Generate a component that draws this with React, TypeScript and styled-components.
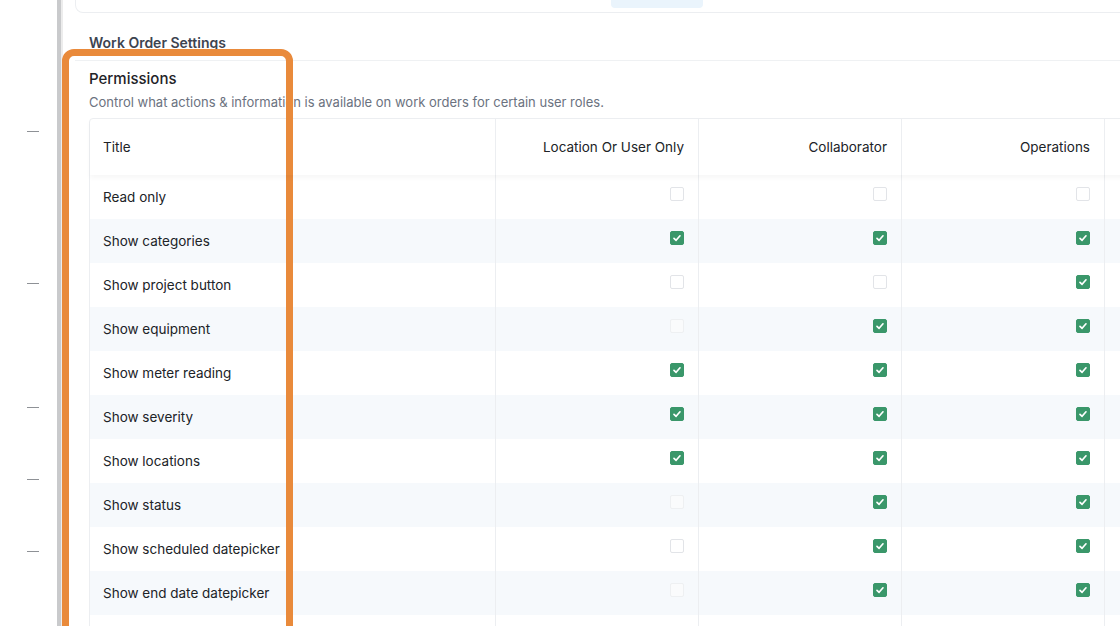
import React from 'react';
import styled, { createGlobalStyle } from 'styled-components';

const GlobalStyle = createGlobalStyle`
  html, body {
    margin: 0;
    padding: 0;
    background: #fff;
    overflow: hidden;
  }
  body {
    font-family: Inter, "Noto Sans", "Liberation Sans", sans-serif;
    color: #1f2328;
    -webkit-font-smoothing: antialiased;
  }
`;

type Perm = {
  title: string;
  values: Array<'on' | 'off' | 'disabled'>;
};

const permissions: Perm[] = [
  { title: 'Read only', values: ['off', 'off', 'off', 'off'] },
  { title: 'Show categories', values: ['on', 'on', 'on', 'on'] },
  { title: 'Show project button', values: ['off', 'off', 'on', 'on'] },
  { title: 'Show equipment', values: ['disabled', 'on', 'on', 'on'] },
  { title: 'Show meter reading', values: ['on', 'on', 'on', 'on'] },
  { title: 'Show severity', values: ['on', 'on', 'on', 'on'] },
  { title: 'Show locations', values: ['on', 'on', 'on', 'on'] },
  { title: 'Show status', values: ['disabled', 'on', 'on', 'on'] },
  { title: 'Show scheduled datepicker', values: ['off', 'on', 'on', 'on'] },
  { title: 'Show end date datepicker', values: ['disabled', 'on', 'on', 'on'] },
];

// last column runs past the edge of the window, its label is not visible
const columns = ['Location Or User Only', 'Collaborator', 'Operations', ''];
const dashes = [132, 152, 124, 72, 72];

const App: React.FC = () => {
  return (
    <>
      <GlobalStyle />
      <Page>
        <Sidebar>
          {dashes.map((gap, i) => (
            <Dash key={i} $gap={gap} />
          ))}
        </Sidebar>
        <Scrollbar />
        <Main>
          <TabsCard>
            <Tab />
            <Tab />
            <Tab />
            <Tab />
            <Tab $active />
            <Tab />
            <Tab />
          </TabsCard>
          <Section>
            <SectionTitle>Work Order Settings</SectionTitle>
            <Divider />
            <Heading>Permissions</Heading>
            <Description>
              Control what actions &amp; information is available on work orders for certain user roles.
            </Description>
            <Table>
              <HeadRow>
                <HeadCell>Title</HeadCell>
                {columns.map((c, i) => (
                  <HeadCell key={i} $right>
                    {c}
                  </HeadCell>
                ))}
              </HeadRow>
              {permissions.map((p, i) => (
                <Row key={p.title} $striped={i % 2 === 1}>
                  <Cell>{p.title}</Cell>
                  {p.values.map((v, j) => (
                    <Cell key={j} $right>
                      <Checkbox $state={v}>
                        {v === 'on' && (
                          <svg width="10" height="10" viewBox="0 0 10 10">
                            <path
                              d="M2 5.3 L4.1 7.3 L8 2.8"
                              fill="none"
                              stroke="#fff"
                              strokeWidth="1.7"
                              strokeLinecap="round"
                              strokeLinejoin="round"
                            />
                          </svg>
                        )}
                      </Checkbox>
                    </Cell>
                  ))}
                </Row>
              ))}
              <Row $striped={false}>
                <Cell />
                {[0, 1, 2, 3].map((j) => (
                  <Cell key={j} $right>
                    <Checkbox $state="on" />
                  </Cell>
                ))}
              </Row>
            </Table>
          </Section>
        </Main>
        <Highlight />
      </Page>
    </>
  );
};

const Page = styled.div`
  position: relative;
  display: flex;
  width: 1120px;
  height: 626px;
  overflow: hidden;
`;

const Sidebar = styled.div`
  width: 57px;
  flex-shrink: 0;
  display: flex;
  flex-direction: column;
  align-items: flex-start;
  padding-left: 27px;
  box-sizing: border-box;
`;

const Dash = styled.div<{ $gap: number }>`
  width: 12px;
  height: 1px;
  background: #8e9196;
  margin-top: ${(p) => p.$gap - 1}px;
`;

const Scrollbar = styled.div`
  width: 4px;
  flex-shrink: 0;
  background: #c9cacc;
  border-right: 2px solid #ececec;
`;

const Main = styled.div`
  flex: 1;
  padding-left: 12px;
  min-width: 0;
`;

const TabsCard = styled.div`
  height: 13px;
  width: 1200px;
  box-sizing: border-box;
  border: 1px solid #eceef1;
  border-top: none;
  border-radius: 0 0 8px 8px;
  display: flex;
  padding-left: 143px;
  gap: 6px;
`;

const Tab = styled.div<{ $active?: boolean }>`
  width: 92px;
  height: 8px;
  border-radius: 0 0 4px 4px;
  background: ${(p) => (p.$active ? '#eaf4fc' : 'transparent')};
`;

const Section = styled.div`
  padding-left: 14px;
  padding-top: 22px;
`;

const SectionTitle = styled.div`
  font-size: 14px;
  font-weight: 600;
  color: #3d4450;
  line-height: 16px;
`;

const Divider = styled.div`
  height: 1px;
  background: #eff1f3;
  margin-top: 9px;
  margin-left: -14px;
  width: 1200px;
`;

const Heading = styled.div`
  margin-top: 9px;
  font-size: 15px;
  font-weight: 500;
  color: #1f2328;
  line-height: 18px;
`;

const Description = styled.div`
  margin-top: 6px;
  font-size: 13px;
  color: #6b7280;
  line-height: 16px;
`;

const Table = styled.div`
  margin-top: 8px;
  width: 1218px;
  border: 1px solid #eceef1;
  border-radius: 4px 0 0 0;
  display: flex;
  flex-direction: column;
`;

const gridCols = '405px 203px 203px 203px 203px';

const HeadRow = styled.div`
  display: grid;
  grid-template-columns: ${gridCols};
  height: 56px;
  box-shadow: 0 3px 5px rgba(0, 0, 0, 0.035);
  position: relative;
  z-index: 1;
`;

const HeadCell = styled.div<{ $right?: boolean }>`
  display: flex;
  align-items: center;
  justify-content: ${(p) => (p.$right ? 'flex-end' : 'flex-start')};
  padding: 0 14px 0 13px;
  font-size: 13.5px;
  color: #202327;
  border-left: ${(p) => (p.$right ? '1px solid #eceef1' : 'none')};
`;

const Row = styled.div<{ $striped: boolean }>`
  display: grid;
  grid-template-columns: ${gridCols};
  height: 44px;
  background: ${(p) => (p.$striped ? '#f6f9fc' : '#fff')};
`;

const Cell = styled.div<{ $right?: boolean }>`
  display: flex;
  align-items: center;
  justify-content: ${(p) => (p.$right ? 'flex-end' : 'flex-start')};
  padding: ${(p) => (p.$right ? '0 14px 6px 0' : '0 13px')};
  font-size: 13.5px;
  color: #202327;
  border-left: ${(p) => (p.$right ? '1px solid #eceef1' : 'none')};
`;

const Checkbox = styled.span<{ $state: 'on' | 'off' | 'disabled' }>`
  width: 14px;
  height: 14px;
  box-sizing: border-box;
  border-radius: 2px;
  display: inline-flex;
  align-items: center;
  justify-content: center;
  background: ${(p) =>
    p.$state === 'on' ? '#3a976a' : p.$state === 'disabled' ? '#fafbfc' : '#fff'};
  border: 1px solid
    ${(p) =>
      p.$state === 'on' ? '#3a976a' : p.$state === 'disabled' ? '#eef0f2' : '#e2e4e8'};
`;

const Highlight = styled.div`
  position: absolute;
  left: 62px;
  top: 49px;
  width: 231px;
  height: 640px;
  box-sizing: border-box;
  border: 7px solid #e98a3b;
  border-radius: 12px;
  pointer-events: none;
`;

export default App;
